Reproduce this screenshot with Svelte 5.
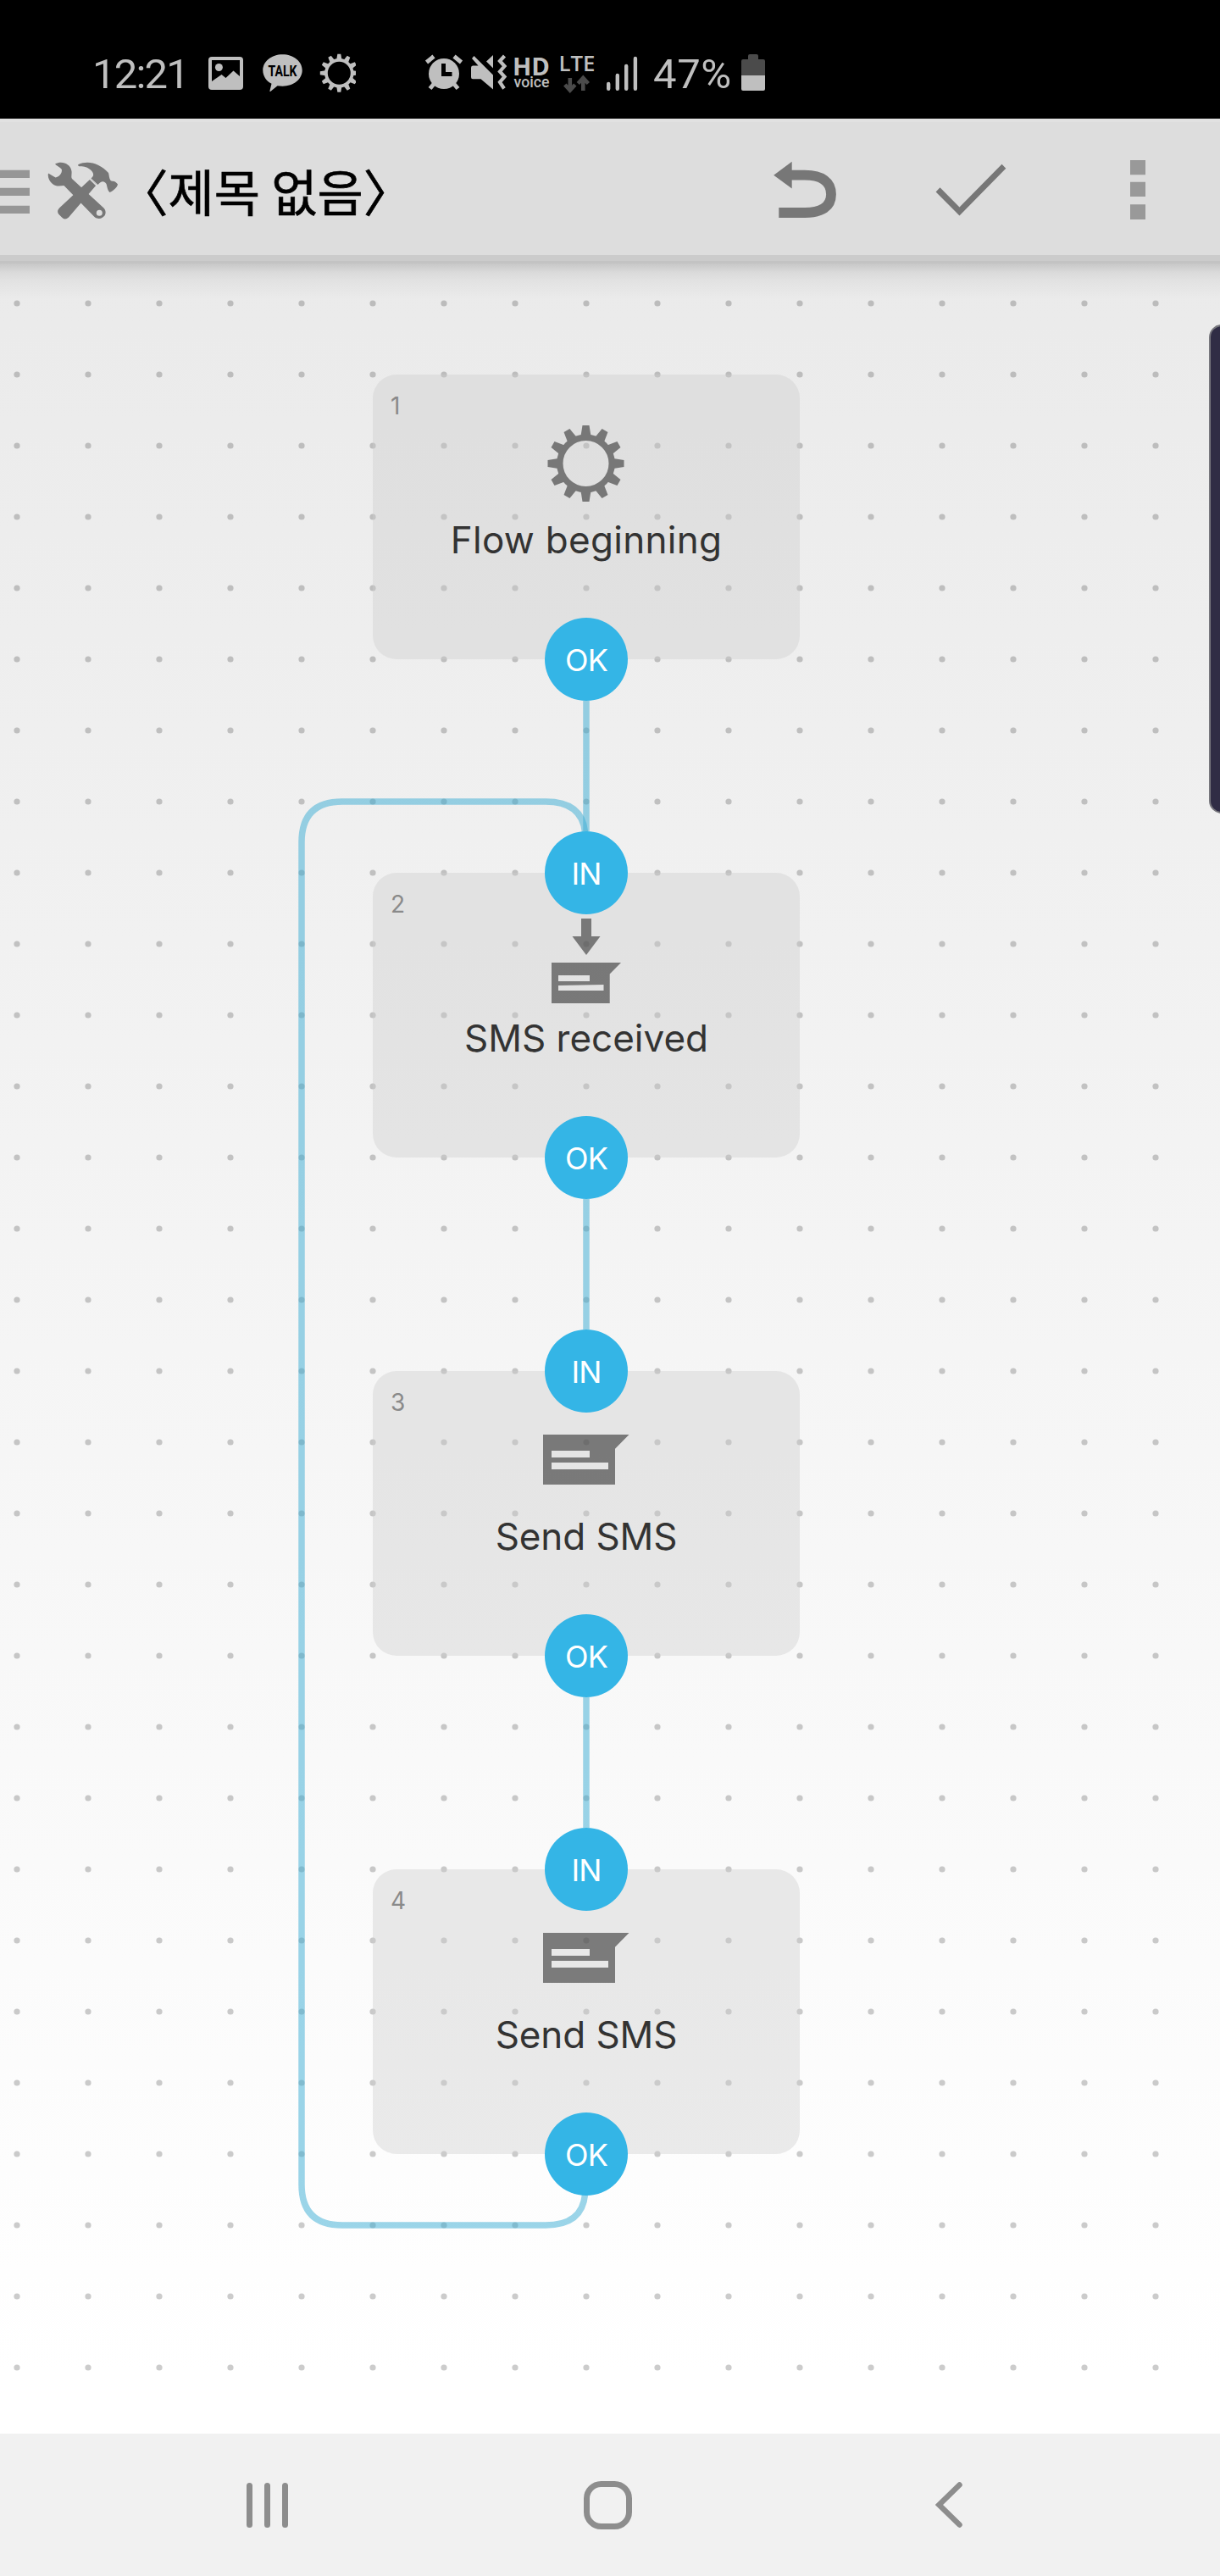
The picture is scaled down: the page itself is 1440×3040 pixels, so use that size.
<script>
  const PITCH = 84;
  const nodes = [
    { id: 1, top: 442, label: 'Flow beginning', kind: 'gear', input: false, tracking: 0.3 },
    { id: 2, top: 1030, label: 'SMS received', kind: 'receive', input: true, tracking: 0 },
    { id: 3, top: 1618, label: 'Send SMS', kind: 'send', input: true, tracking: -0.1 },
    { id: 4, top: 2206, label: 'Send SMS', kind: 'send', input: true, tracking: -0.1 }
  ];
  const teeth = Array.from({ length: 12 }, (_, i) => i * 30);
</script>

{#snippet gear()}
  <g fill="none" stroke="currentColor" stroke-width="7.4"><circle r="30.7" /></g>
  {#each teeth as angle}
    <path d="M-6-32.5-4-45H4L6-32.5Z" fill="currentColor" transform="rotate({angle})" />
  {/each}
{/snippet}

<div class="phone">
  <header class="status">
    <span class="clock">12:21</span>
    <svg class="left-icons" width="180" height="60" viewBox="240 56 180 60">
      <rect x="246" y="67" width="41" height="39" rx="4" fill="#bfbfbf" />
      <path d="M250 71H283V90L275.500 83.500L266.500 92L261.500 88L250 96Z" fill="#000" />
      <circle cx="258.400" cy="79.500" r="4.500" fill="#bfbfbf" />
      <path d="M333.500 64.300C346.500 64.300 356.700 72.500 356.700 83S346.500 101.700 333.500 101.700C331.500 101.700 329.500 101.500 327.500 101.200L319.500 107.800C318.700 108.300 318.200 107.800 318.500 107L320.500 98.800C314.300 95.500 310.300 89.800 310.300 83C310.300 72.500 320.500 64.300 333.500 64.300Z" fill="#bfbfbf" />
      <text x="316.500" y="90" class="talk" textLength="34" lengthAdjust="spacingAndGlyphs">TALK</text>
      <g class="lit" transform="translate(400.300 86.300) scale(.5)">{@render gear()}</g>
    </svg>
    <svg class="right-icons" width="262" height="60" viewBox="500 56 262 60">
      <g stroke="#bfbfbf" fill="none">
        <circle cx="524" cy="87" r="18" fill="#bfbfbf" stroke="none" />
        <path d="M503.500 73.500L512 66.500M536 66.500L544.500 73.500" stroke-width="5" />
        <path d="M513 98L507.500 104.500M535 98L540.500 104.500" stroke-width="5" />
        <path d="M523.500 75V87.500H533.500" stroke="#000" stroke-width="5" />
      </g>
      <path d="M559.500 66L582 88.500V105.500L567.500 93.300H558Q556 93.300 556 91V80Q556 77.500 558 77.500H564.500L557 69ZM574 72.500L582 65V80.500Z" fill="#bfbfbf" />
      <path d="M595.500 66L590 72L595.500 78L590 84.500L595.500 90.500L590 97L595 104.500" fill="none" stroke="#bfbfbf" stroke-width="4.200" />
      <text x="605" y="88.500" class="hd" textLength="44" lengthAdjust="spacingAndGlyphs">HD</text>
      <text x="606.500" y="103" class="voice" textLength="42" lengthAdjust="spacingAndGlyphs">voice</text>
      <text x="659.500" y="84" class="lte" textLength="43" lengthAdjust="spacingAndGlyphs">LTE</text>
      <path d="M672.800 92V106M666.800 100L672.800 106.500L678.800 100M688.300 107V93M682.300 98.500L688.300 92L694.300 98.500" fill="none" stroke="#4b4b4b" stroke-width="4.600" />
      <path d="M718.200 99V104.800M728.800 89V104.800M739.200 78V104.800M749.900 69V104.800" stroke="#bfbfbf" stroke-width="4.400" stroke-linecap="round" />
    </svg>
    <span class="percent">47%</span>
    <svg class="battery" width="28" height="43" viewBox="0 0 28 43">
      <path d="M8 2Q8 0 10 0H18Q20 0 20 2V6H26Q28 6 28 8V25H0V8Q0 6 2 6H8Z" fill="#4b4b4b" />
      <path d="M0 25H28V41Q28 43 26 43H2Q0 43 0 41Z" fill="#bfbfbf" />
    </svg>
  </header>

  <div class="toolbar">
    <svg class="burger" width="35" height="52" viewBox="0 0 35 52"><path d="M0 .7H35V10H0ZM0 21.700H35V31H0ZM0 42.700H35V52H0Z" fill="#969696" /></svg>
    <svg class="tools" width="84" height="70" viewBox="56 190 84 70">
      <path d="M65 193.500C73 189.500 83 193 84.500 202C85 206 83.500 208.500 85 211L122.500 245.500C129 253 119 262 111.500 256L75.500 219C71 219.500 66 220.500 62 217C58 213.500 56 209 57 204.500L65.500 209.500C70 208.500 73 205 73 200.500C71.500 197 68 197 65 193.500Z" fill="#777" />
      <circle cx="117.300" cy="251.300" r="3.500" fill="#ddd" />
      <path d="M107 211L114 218L81 256.500Q76.500 260.500 73 256.500L69.500 253Q66.500 249.500 70 245.500Z" fill="#777" />
      <path d="M92.500 194C104 188.500 118 193 128 204C129 207 128.500 210 130.500 213C133 214.500 135.500 212.500 139 217.500C138.500 221 134 225 129.500 227C127 225 126.500 220 125.500 217C122.500 212.500 119 214 115.500 218L107.500 210.500C111.500 207.500 110.500 204 107.500 201C103 196.500 98 196 93.500 196.200Q91.500 195.500 92.500 194Z" fill="#777" />
      <path d="M106 211L114 219" stroke="#ddd" stroke-width="1.600" />
    </svg>
    <h1><span class="bracket">〈</span><span>제목 없음</span><span class="bracket">〉</span></h1>
    <svg class="undo" width="75" height="68" viewBox="913 190 75 68">
      <path d="M933 206.600H950C970 206.600 981 214.500 981 229.300C981 244 970 251 950 251H919.300" fill="none" stroke="#777" stroke-width="11.800" />
      <path d="M913.200 206.700L934.700 190.700V222.500Z" fill="#777" />
    </svg>
    <svg class="check" width="84" height="62" viewBox="1104 193 84 62"><path d="M1104.600 226.500L1109.500 221.300L1132.500 244.400L1182.500 193.700L1187.300 198.700L1132.500 254.400Z" fill="#777" /></svg>
    <svg class="more" width="18" height="70" viewBox="0 0 18 70"><path d="M0 0H18V17.300H0ZM0 25.700H18V43H0ZM0 52.300H18V70H0Z" fill="#999" /></svg>
  </div>

  <main class="canvas">
    <svg class="layer" width="1440" height="2732" viewBox="0 140 1440 2732">
      <defs>
        <pattern id="grid" x="-22" y="316" width={PITCH} height={PITCH} patternUnits="userSpaceOnUse">
          <circle cx="42" cy="42" r="3.600" fill="#000" fill-opacity=".2" />
        </pattern>
      </defs>
      <rect y="316" width="1440" height="2556" fill="url(#grid)" />
    </svg>
    {#each nodes as node}
      <section class="node" style:top="{node.top - 140}px">
        <span class="number">{node.id}</span>
        <svg class="glyph" width="120" height="112" viewBox="-60 40 120 112">
          {#if node.kind === 'gear'}
            <g transform="translate(-.5 105)">{@render gear()}</g>
          {:else if node.kind === 'receive'}
            <path d="M-6 54H6V75H16.500L0 97L-16.500 75H-6Z" fill="currentColor" />
            <path fill-rule="evenodd" d="M-41 106H41L27.700 119.500V154H-41ZM-33 121V128H4V121ZM-33 133V139H20.500V132Z" fill="currentColor" />
          {:else}
            <path fill-rule="evenodd" d="M-51 75H50.500L34 91.700V134H-51ZM-41 94V102H4V94ZM-41 108V116H26V108Z" fill="currentColor" />
          {/if}
        </svg>
        <span class="label" style:letter-spacing="{node.tracking}px">{node.label}</span>
      </section>
    {/each}
    <svg class="layer" width="1440" height="2732" viewBox="0 140 1440 2732">
      <g fill="none" stroke="#38abd3" stroke-opacity=".5" stroke-width="7.500">
        <path d="M692 827V981" />
        <path d="M692 1415V1569" />
        <path d="M692 2003V2157" />
        <path d="M690.500 2590Q687 2626 644 2626H404Q356 2626 356 2578V994Q356 946 404 946H644Q687 946 690.500 982" />
      </g>
    </svg>
    {#each nodes as node}
      {#if node.input}<span class="port" style:top="{node.top - 189}px">IN</span>{/if}
      <span class="port" style:top="{node.top + 147}px">OK</span>
    {/each}
    <div class="edge"></div>
  </main>

  <footer class="nav">
    <svg width="49" height="53" viewBox="0 0 49 53"><path d="M3.500 3.500V49.500M24.500 3.500V49.500M45.500 3.500V49.500" stroke="#8d8d8d" stroke-width="7" stroke-linecap="round" /></svg>
    <svg class="home" width="57" height="57" viewBox="0 0 57 57"><rect x="3.500" y="3.500" width="50" height="50" rx="17" fill="none" stroke="#8d8d8d" stroke-width="7" /></svg>
    <svg class="back" width="32" height="54" viewBox="0 0 32 54"><path d="M28.500 3.500L4.500 27L28.500 50.500" fill="none" stroke="#8d8d8d" stroke-width="6.500" stroke-linecap="round" /></svg>
  </footer>
</div>

<style>
  :global(body) { margin: 0; }
  svg { display: block; flex: none; }
  .phone {
    width: 1440px;
    height: 3040px;
    display: flex;
    flex-direction: column;
    overflow: hidden;
    font-family: Inter, Roboto, "Noto Sans CJK KR", sans-serif;
  }
  .status {
    height: 140px;
    flex: none;
    box-sizing: border-box;
    padding-top: 56px;
    display: flex;
    align-items: flex-start;
    background: #000;
    color: #bfbfbf;
  }
  .clock, .percent { font: 400 49px/63px Roboto, sans-serif; white-space: nowrap; }
  .clock { width: 131px; margin-left: 109px; letter-spacing: -1.8px; }
  .right-icons { margin-left: 80px; }
  .percent { width: 104px; margin-left: 9px; letter-spacing: 0.6px; }
  .battery { margin-top: 8px; }
  .lit { color: #bfbfbf; }
  .talk { font: 700 17.500px Roboto, sans-serif; fill: #000; }
  .hd { font: 700 28px "Open Sans", sans-serif; fill: #bfbfbf; }
  .voice { font: 500 19px Roboto, sans-serif; fill: #bfbfbf; }
  .lte { font: 600 25px "Open Sans", sans-serif; fill: #bfbfbf; }

  .toolbar {
    height: 171px;
    flex: none;
    position: relative;
    z-index: 1;
    box-sizing: border-box;
    padding-bottom: 10px;
    display: flex;
    align-items: flex-start;
    background: linear-gradient(#e1e1e1 0 4px, #ddd 4px 161px, #cbcbcb 161px 168px, #c3c3c3 168px);
  }
  .toolbar::after {
    content: "";
    position: absolute;
    inset: 171px 0 auto;
    height: 42px;
    background: linear-gradient(rgba(0, 0, 0, .15), rgba(0, 0, 0, .07) 25%, rgba(0, 0, 0, .035) 50%, transparent);
  }
  .burger { margin-top: 60px; }
  .tools { margin: 50px 0 0 21px; }
  h1 {
    width: 740px;
    margin: 45px 0 0 29px;
    font: 400 59px/80px "Noto Sans CJK KR", sans-serif;
    color: #000;
    white-space: nowrap;
    letter-spacing: 0;
    -webkit-text-stroke: 0.7px #000;
  }
  .bracket { font-feature-settings: "halt"; }
  .undo { margin: 50px 0 0 4px; }
  .check { margin: 53px 0 0 116px; }
  .more { margin: 49px 0 0 146px; }

  .canvas {
    position: relative;
    height: 2732px;
    margin-top: -171px;
    flex: none;
    overflow: hidden;
    background: linear-gradient(#e9e9e9, #fff 2660px);
  }
  .layer { position: absolute; inset: 0; }
  .node {
    position: absolute;
    left: 440px;
    width: 504px;
    height: 336px;
    border-radius: 28px;
    background: rgba(204, 204, 204, .4);
    display: flex;
    flex-direction: column;
    align-items: center;
  }
  .number {
    align-self: flex-start;
    height: 40px;
    box-sizing: border-box;
    padding: 17px 0 0 21px;
    font-size: 28px;
    line-height: 40px;
    font-weight: 400;
    color: #8a8a8a;
  }
  .glyph { color: #333; opacity: .6; overflow: visible; }
  .label {
    margin-top: 15px;
    font-size: 44px;
    line-height: 56px;
    color: #333;
    white-space: nowrap;
  }
  .port {
    position: absolute;
    left: 643px;
    width: 98px;
    height: 98px;
    border-radius: 50%;
    background: #34b5e6;
    color: #fff;
    font-size: 36px;
    line-height: 100px;
    text-align: center;
    letter-spacing: -0.8px;
  }
  .edge {
    position: absolute;
    right: -20px;
    top: 243px;
    width: 33px;
    height: 577px;
    box-sizing: border-box;
    border: 2px solid #77777d;
    border-radius: 15px;
    background: #302d45;
  }

  .nav {
    height: 168px;
    flex: none;
    display: flex;
    align-items: center;
    background: #f1f1f1;
  }
  .nav svg:first-child { margin-left: 291px; }
  .home { margin-left: 349px; }
  .back { margin-left: 358px; }
</style>
